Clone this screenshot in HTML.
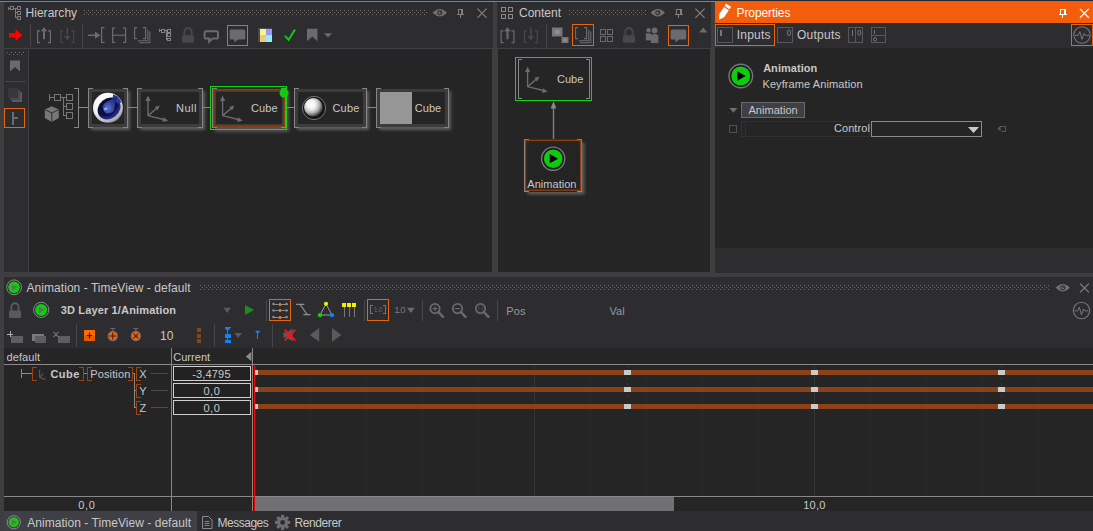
<!DOCTYPE html>
<html lang="en"><head><meta charset="utf-8"><title>Animation - TimeView</title>
<style>
html,body{margin:0;padding:0}
body{width:1093px;height:531px;overflow:hidden;position:relative;background:#3e3e40;font-family:"Liberation Sans",sans-serif;font-size:12px}
#app div{position:absolute}
.t{position:absolute;white-space:nowrap;line-height:1;}
svg#ov{position:absolute;left:0;top:0}
</style></head><body>
<div id="app">
<div style="left:0px;top:0px;width:1093px;height:1px;background:#222a34;"></div>
<div style="left:0px;top:1px;width:1093px;height:1px;background:#f45d0b;"></div>
<div style="left:4px;top:2px;width:489px;height:47px;background:#2d2d30;"></div>
<div style="left:4px;top:48px;width:489px;height:1px;background:#3f3f46;"></div>
<div style="left:4px;top:49px;width:25px;height:223px;background:#2d2d30;"></div>
<div style="left:28px;top:49px;width:1px;height:223px;background:#3f3f46;"></div>
<div style="left:29px;top:49px;width:463px;height:223px;background:#252526;"></div>
<div style="left:492px;top:49px;width:1px;height:223px;background:#3e3e40;"></div>
<div style="left:497px;top:2px;width:214px;height:47px;background:#2d2d30;"></div>
<div style="left:497px;top:48px;width:214px;height:1px;background:#3f3f46;"></div>
<div style="left:498px;top:49px;width:212px;height:223px;background:#252526;"></div>
<div style="left:497px;top:49px;width:1px;height:223px;background:#3e3e40;"></div>
<div style="left:710px;top:49px;width:1px;height:223px;background:#3e3e40;"></div>
<div style="left:715px;top:2px;width:378px;height:21px;background:#f45d0b;"></div>
<div style="left:715px;top:23px;width:378px;height:25px;background:#2d2d30;"></div>
<div style="left:715px;top:48px;width:378px;height:200px;background:#252526;"></div>
<div style="left:715px;top:248px;width:378px;height:25px;background:#2d2d30;"></div>
<div style="left:4px;top:277px;width:1089px;height:71px;background:#2d2d30;"></div>
<div style="left:4px;top:348px;width:1089px;height:163px;background:#252526;"></div>
<div style="left:4px;top:511px;width:1089px;height:20px;background:#2d2d30;"></div>
<div style="left:4px;top:511px;width:193px;height:20px;background:#3f3f46;"></div>
</div>
<svg id="ov" width="1093" height="531" viewBox="0 0 1093 531">
<defs>
<pattern id="grip" x="0" y="0" width="4" height="4" patternUnits="userSpaceOnUse">
<rect x="0" y="0" width="1" height="1" fill="#5c5c60"/><rect x="2" y="2" width="1" height="1" fill="#5c5c60"/></pattern>
<radialGradient id="gSphere" cx="0.38" cy="0.36" r="0.72"><stop offset="0" stop-color="#ffffff"/><stop offset="0.3" stop-color="#f4f4f4"/><stop offset="0.6" stop-color="#b8b8b8"/><stop offset="0.85" stop-color="#505050"/><stop offset="1" stop-color="#101010"/></radialGradient>
<radialGradient id="gC4d" cx="0.35" cy="0.3" r="0.8"><stop offset="0" stop-color="#ffffff"/><stop offset="0.55" stop-color="#f2f2f2"/><stop offset="0.85" stop-color="#b0b0b0"/><stop offset="1" stop-color="#707070"/></radialGradient>
<radialGradient id="gC4dIn" cx="0.5" cy="0.75" r="0.7"><stop offset="0" stop-color="#5a78e0"/><stop offset="0.35" stop-color="#2a3ca0"/><stop offset="0.75" stop-color="#10164a"/><stop offset="1" stop-color="#080a28"/></radialGradient>
<radialGradient id="gCav" cx="0.5" cy="0.35" r="0.75"><stop offset="0" stop-color="#080a2c"/><stop offset="0.55" stop-color="#0c1040"/><stop offset="0.85" stop-color="#3038a8"/><stop offset="1" stop-color="#7078d8"/></radialGradient>
<radialGradient id="gDrop" cx="0.35" cy="0.7" r="0.8"><stop offset="0" stop-color="#5a74e0"/><stop offset="0.45" stop-color="#34449c"/><stop offset="1" stop-color="#1a2060"/></radialGradient>
<filter id="sh" x="-20%" y="-20%" width="150%" height="150%"><feGaussianBlur stdDeviation="1.6"/></filter>
</defs>
<g transform="translate(7.5,6) scale(1.0)" fill="none" stroke="#7c7c80" stroke-width="1" shape-rendering="crispEdges"><path d="M0.5 0.5V3.5"/><path d="M0.5 2H2.5"/><rect x="2.5" y="0.5" width="3" height="3"/><path d="M5.5 2H9.5"/><rect x="9.5" y="0.5" width="3" height="3"/><path d="M7.5 2V11.5H9.5"/><path d="M7.5 6.5H9.5"/><rect x="9.5" y="5" width="3" height="3"/><rect x="9.5" y="10" width="3" height="3"/></g>
<pattern id="gp1" x="84" y="10" width="4" height="4" patternUnits="userSpaceOnUse"><rect x="0" y="0" width="1" height="1" fill="#707074"/><rect x="2" y="2" width="1" height="1" fill="#707074"/></pattern><rect x="84" y="10" width="343" height="5" fill="url(#gp1)"/>
<g transform="translate(439.8,12.8)"><path d="M-7.2 0 Q-3.5 -3.7 0 -3.7 Q3.5 -3.7 7.2 0 Q3.5 3.7 0 3.7 Q-3.5 3.7 -7.2 0Z" fill="#707074"/><circle cx="0" cy="0" r="2.5" fill="#2d2d30"/><circle cx="0" cy="0" r="1.5" fill="#707074"/><circle cx="0.6" cy="-0.6" r="0.7" fill="#2d2d30"/></g>
<g transform="translate(460.3,13.3)" fill="none" stroke="#808084" stroke-width="1" shape-rendering="crispEdges"><path d="M-2 -3.5H2.5V1.5H-2Z"/><path d="M1.5 -3.5V1.5"/><path d="M-3.5 1.5H4"/><path d="M0 1.5V5"/></g>
<path d="M477.4 8.700000000000001L486.6 17.9M486.6 8.700000000000001L477.4 17.9" stroke="#808084" stroke-width="1.2" fill="none"/>
<path d="M9 33H15.5V29.2L22.2 35.2L15.5 41.2V37.4H9Z" fill="#ff0000"/>
<rect x="30" y="24" width="1" height="23" fill="#46464a" shape-rendering="crispEdges"/>
<g transform="translate(37,27.3)" fill="none" stroke="#6a6a6f" stroke-width="1.2"><path d="M3 3.5H0.6V15.4H3"/><path d="M11 3.5H13.4V15.4H11"/></g>
<g transform="translate(37,27.3)"><path d="M7 0L10.4 4H8V12H6V4H3.6Z" fill="#6a6a6f"/></g>
<g transform="translate(60.3,27.3)" fill="none" stroke="#48484c" stroke-width="1.2"><path d="M3 3.5H0.6V15.4H3"/><path d="M11 3.5H13.4V15.4H11"/></g>
<g transform="translate(60.3,27.3)"><path d="M7 13L10.4 9H7.8V0.5H6.2V9H3.6Z" fill="#48484c"/></g>
<rect x="82" y="24" width="1" height="23" fill="#46464a" shape-rendering="crispEdges"/>
<g fill="none" stroke="#6a6a6f" stroke-width="1.3"><path d="M104.6 27.6H101.6V42.4H104.6"/></g><path d="M88 34.4H95V31.6L100.4 35.2L95 38.8V36H88Z" fill="#6a6a6f"/>
<g fill="none" stroke="#6a6a6f" stroke-width="1.2"><path d="M115.2 28.2H112.6V42.4H115.2"/><path d="M123 28.2H125.6V42.4H123"/><path d="M112.6 35.2H125.6"/></g>
<g fill="none" stroke="#6a6a6f" stroke-width="1.1"><path d="M137 27.6H134.6V38.6H137"/><path d="M143 27.6H145.6V38.6H143"/><path d="M147.8 29.7V40.8H137.8"/><path d="M149.8 31.5V42.8H139"/></g>
<g transform="translate(159.2,28.8) scale(0.92)" fill="none" stroke="#8a8a8e" stroke-width="1" shape-rendering="crispEdges"><path d="M0.5 0.5V3.5"/><path d="M0.5 2H2.5"/><rect x="2.5" y="0.5" width="3" height="3"/><path d="M5.5 2H9.5"/><rect x="9.5" y="0.5" width="3" height="3"/><path d="M7.5 2V11.5H9.5"/><path d="M7.5 6.5H9.5"/><rect x="9.5" y="5" width="3" height="3"/><rect x="9.5" y="10" width="3" height="3"/></g>
<g transform="translate(182,27.2)"><path d="M2.4 8.4V4.6A3.6 3.8 0 0 1 9.6 4.6V8.4" fill="none" stroke="#48484c" stroke-width="1.9"/><rect x="0" y="8" width="12" height="7.6" rx="1" fill="#48484c"/></g>
<path d="M205.79999999999998 31.2H216.8Q218.0 31.2 218.0 32.4V37.4Q218.0 38.6 216.8 38.6H212.53199999999998L209.144 41.800000000000004V38.6H205.79999999999998Q204.6 38.6 204.6 37.4V32.4Q204.6 31.2 205.79999999999998 31.2Z" fill="none" stroke="#6a6a6f" stroke-width="2"/>
<rect x="227.5" y="25.5" width="20" height="20" fill="none" stroke="#e8640f" stroke-width="1" shape-rendering="crispEdges"/>
<path d="M231.1 29.6H243.79999999999998Q245.29999999999998 29.6 245.29999999999998 31.1V38.1Q245.29999999999998 39.6 243.79999999999998 39.6H238.23499999999999L234.31 42.6V39.6H231.1Q229.6 39.6 229.6 38.1V31.1Q229.6 29.6 231.1 29.6Z" fill="#6a6a6f"/>
<g shape-rendering="crispEdges"><rect x="258" y="28" width="14" height="14" fill="#4a4a4e"/><rect x="259.5" y="28.5" width="6" height="6.5" fill="#f5f58a"/><rect x="265.5" y="28.5" width="6" height="6.5" fill="#9a96ff"/><rect x="259.5" y="35" width="6" height="6.5" fill="#f5c67a"/><rect x="265.5" y="35" width="6" height="6.5" fill="#8cf0f5"/></g>
<path d="M285 35.8L288.6 39.8L295 29.4" fill="none" stroke="#12c812" stroke-width="2"/>
<path d="M307 28.8H317.5V41.2L312.2 36.6L307 41.2Z" fill="#6a6a6f"/><path d="M324 33.2H332L328 37.6Z" fill="#6a6a6f"/>
<pattern id="gp2" x="7" y="52" width="4" height="4" patternUnits="userSpaceOnUse"><rect x="0" y="0" width="1" height="1" fill="#707074"/><rect x="2" y="2" width="1" height="1" fill="#707074"/></pattern><rect x="7" y="52" width="18" height="3" fill="url(#gp2)"/>
<path d="M10 60.4H20V71.6L15 67L10 71.6Z" fill="#6a6a6f"/>
<rect x="5" y="81" width="21" height="1" fill="#46464a" shape-rendering="crispEdges"/>
<g shape-rendering="crispEdges"><rect x="12" y="92" width="10" height="10" fill="#5a5a5e"/><rect x="10" y="90" width="10" height="10" fill="#48484c"/><rect x="8" y="88" width="10" height="9.5" fill="#38383c"/></g>
<rect x="4.5" y="108.5" width="20" height="19" fill="none" stroke="#e8640f" stroke-width="1" shape-rendering="crispEdges"/>
<g shape-rendering="crispEdges" fill="#6a6a6f"><rect x="12" y="112" width="2" height="12.5"/><rect x="14" y="117.2" width="4" height="2"/></g>
<g fill="none" stroke="#77777b" stroke-width="1" shape-rendering="crispEdges"><rect x="54.5" y="94.5" width="6" height="6"/><rect x="66.5" y="94.5" width="6" height="6"/><rect x="66.5" y="103.5" width="6" height="6"/><rect x="66.5" y="112.5" width="6" height="6"/><path d="M49.5 94V101"/><path d="M49.5 97.5H54.5"/><path d="M60.5 97.5H66.5"/><path d="M63.5 97.5V115.5H66.5"/><path d="M63.5 106.5H66.5"/></g>
<g transform="translate(44.8,106.3)"><path d="M7 0L14 3.2V11.6L7 15.8L0 11.6V3.2Z" fill="#77777b"/><path d="M0.4 3.4L7 6.8L13.6 3.4M7 6.8V15.4" stroke="#252526" stroke-width="0.9" fill="none"/></g>
<path d="M74 88.5H78.5V127.5H74" fill="none" stroke="#868686" stroke-width="1" shape-rendering="crispEdges"/>
<rect x="79" y="107" width="9" height="1" fill="#868686" shape-rendering="crispEdges"/>
<rect x="91" y="91" width="39" height="39" fill="#8a8a8a" opacity="0.55" filter="url(#sh)"/>
<rect x="89" y="89" width="38" height="38" fill="#3c3c3e" shape-rendering="crispEdges"/>
<rect x="92" y="92" width="32" height="32" fill="#252526" shape-rendering="crispEdges"/>
<g fill="none" stroke="#868686" stroke-width="1" shape-rendering="crispEdges"><path d="M93 88.5H88.5V127.5H93"/><path d="M123 88.5H127.5V127.5H123"/></g>
<rect x="128" y="107" width="9" height="1" fill="#868686" shape-rendering="crispEdges"/>
<rect x="140" y="91" width="65" height="39" fill="#8a8a8a" opacity="0.55" filter="url(#sh)"/>
<rect x="138" y="89" width="64" height="38" fill="#3c3c3e" shape-rendering="crispEdges"/>
<rect x="141" y="92" width="58" height="32" fill="#252526" shape-rendering="crispEdges"/>
<g fill="none" stroke="#868686" stroke-width="1" shape-rendering="crispEdges"><path d="M142 88.5H137.5V127.5H142"/><path d="M198 88.5H202.5V127.5H198"/></g>
<rect x="203" y="107" width="7" height="1" fill="#868686" shape-rendering="crispEdges"/>
<rect x="215" y="91" width="74" height="41" fill="#8a8a8a" opacity="0.45" filter="url(#sh)"/>
<rect x="213" y="89" width="72" height="38" fill="#3c3c3e" shape-rendering="crispEdges"/>
<rect x="216" y="92" width="66" height="32" fill="#252526" shape-rendering="crispEdges"/>
<g fill="none" stroke="#868686" stroke-width="1" shape-rendering="crispEdges"><path d="M217 88.5H212.5V127.5H217"/><path d="M281 88.5H285.5V127.5H281"/></g>
<rect x="213.75" y="89.75" width="70.5" height="36.5" fill="none" stroke="#8e3c0c" stroke-width="1.6"/>
<rect x="210.5" y="86.5" width="76" height="43" fill="none" stroke="#14d214" stroke-width="1" shape-rendering="crispEdges"/>
<circle cx="284" cy="93" r="4.5" fill="#0fcc0f"/>
<rect x="287" y="107" width="7" height="1" fill="#868686" shape-rendering="crispEdges"/>
<rect x="297" y="91" width="72" height="39" fill="#8a8a8a" opacity="0.55" filter="url(#sh)"/>
<rect x="295" y="89" width="71" height="38" fill="#3c3c3e" shape-rendering="crispEdges"/>
<rect x="298" y="92" width="65" height="32" fill="#252526" shape-rendering="crispEdges"/>
<g fill="none" stroke="#868686" stroke-width="1" shape-rendering="crispEdges"><path d="M299 88.5H294.5V127.5H299"/><path d="M362 88.5H366.5V127.5H362"/></g>
<rect x="367" y="107" width="9" height="1" fill="#868686" shape-rendering="crispEdges"/>
<rect x="379" y="91" width="72" height="39" fill="#8a8a8a" opacity="0.55" filter="url(#sh)"/>
<rect x="377" y="89" width="71" height="38" fill="#3c3c3e" shape-rendering="crispEdges"/>
<rect x="380" y="92" width="65" height="32" fill="#252526" shape-rendering="crispEdges"/>
<g fill="none" stroke="#868686" stroke-width="1" shape-rendering="crispEdges"><path d="M381 88.5H376.5V127.5H381"/><path d="M444 88.5H448.5V127.5H444"/></g>
<rect x="380" y="92" width="32" height="32" fill="#969696" shape-rendering="crispEdges"/>
<g transform="translate(148,115.6) scale(1.0)"><g stroke="#6a6a6f" stroke-width="1.4" fill="none"><path d="M0 0.5V-16"/><path d="M0 0L9 -7.6"/><path d="M0 0L16.5 4.2"/></g><path d="M0 -20.2L-2.6 -14.6H2.6Z" fill="#6a6a6f"/><path d="M11.8 -10L6.6 -8.6L9.6 -5Z" fill="#6a6a6f"/><path d="M20.2 5.2L14.4 6.4L15.7 1.6Z" fill="#6a6a6f"/></g>
<g transform="translate(222.6,115.6) scale(1.0)"><g stroke="#6a6a6f" stroke-width="1.4" fill="none"><path d="M0 0.5V-16"/><path d="M0 0L9 -7.6"/><path d="M0 0L16.5 4.2"/></g><path d="M0 -20.2L-2.6 -14.6H2.6Z" fill="#6a6a6f"/><path d="M11.8 -10L6.6 -8.6L9.6 -5Z" fill="#6a6a6f"/><path d="M20.2 5.2L14.4 6.4L15.7 1.6Z" fill="#6a6a6f"/></g>
<circle cx="314" cy="108" r="11.6" fill="#141414" stroke="#77777b" stroke-width="1"/><circle cx="313.4" cy="107.3" r="9.3" fill="url(#gSphere)"/>
<g transform="translate(108,107.8)"><circle r="15" fill="url(#gC4d)"/>
<g transform="rotate(-38)"><ellipse cx="0.4" cy="1.2" rx="12.2" ry="10.2" fill="url(#gCav)"/></g>
<path d="M5.2 -13.6Q10.8 -11.6 13.4 -5.4L9.4 -4.2L4.6 -9.8Z" fill="#2a38a4"/>
<path d="M9.6 -11.8C7.6 -8.4 7.2 -4 6.6 -0.6A5.9 5.9 0 1 1 -2.2 -5.4C1.4 -8 6.4 -9 9.6 -11.8Z" fill="url(#gDrop)"/>
<ellipse cx="-2.4" cy="1.0" rx="1.7" ry="1.1" fill="#a8c0ff" opacity="0.85" transform="rotate(-30 -2.4 1)"/>
</g>
<g fill="none" stroke="#8a8a8e" stroke-width="1" shape-rendering="crispEdges"><rect x="501.5" y="7.5" width="4" height="4"/><rect x="508.0" y="7.5" width="4" height="4"/><rect x="501.5" y="14.0" width="4" height="4"/><rect x="508.0" y="14.0" width="4" height="4"/></g>
<pattern id="gp3" x="569" y="10" width="4" height="4" patternUnits="userSpaceOnUse"><rect x="0" y="0" width="1" height="1" fill="#707074"/><rect x="2" y="2" width="1" height="1" fill="#707074"/></pattern><rect x="569" y="10" width="77" height="5" fill="url(#gp3)"/>
<g transform="translate(657.8,12.8)"><path d="M-7.2 0 Q-3.5 -3.7 0 -3.7 Q3.5 -3.7 7.2 0 Q3.5 3.7 0 3.7 Q-3.5 3.7 -7.2 0Z" fill="#707074"/><circle cx="0" cy="0" r="2.5" fill="#2d2d30"/><circle cx="0" cy="0" r="1.5" fill="#707074"/><circle cx="0.6" cy="-0.6" r="0.7" fill="#2d2d30"/></g>
<g transform="translate(678.5,13.3)" fill="none" stroke="#808084" stroke-width="1" shape-rendering="crispEdges"><path d="M-2 -3.5H2.5V1.5H-2Z"/><path d="M1.5 -3.5V1.5"/><path d="M-3.5 1.5H4"/><path d="M0 1.5V5"/></g>
<path d="M695.4 8.700000000000001L704.6 17.9M704.6 8.700000000000001L695.4 17.9" stroke="#808084" stroke-width="1.2" fill="none"/>
<g transform="translate(500.5,27.3)" fill="none" stroke="#6a6a6f" stroke-width="1.2"><path d="M3 3.5H0.6V15.4H3"/><path d="M11 3.5H13.4V15.4H11"/></g>
<g transform="translate(500.5,27.3)"><path d="M7 0L10.4 4H8V12H6V4H3.6Z" fill="#6a6a6f"/></g>
<g transform="translate(523.8,27.3)" fill="none" stroke="#48484c" stroke-width="1.2"><path d="M3 3.5H0.6V15.4H3"/><path d="M11 3.5H13.4V15.4H11"/></g>
<g transform="translate(523.8,27.3)"><path d="M7 13L10.4 9H7.8V0.5H6.2V9H3.6Z" fill="#48484c"/></g>
<rect x="546" y="24" width="1" height="23" fill="#46464a" shape-rendering="crispEdges"/>
<g><rect x="552" y="27.5" width="10.5" height="9" fill="#77777b"/><rect x="554.94" y="29.84" width="4.62" height="4.32" fill="#8e8e92"/></g>
<g><rect x="561.5" y="37" width="7" height="6" fill="#77777b"/><rect x="563.46" y="38.56" width="3.08" height="2.88" fill="#8e8e92"/></g>
<rect x="572.5" y="24.5" width="21" height="21" fill="none" stroke="#e8640f" stroke-width="1" shape-rendering="crispEdges"/>
<g fill="none" stroke="#6a6a6f" stroke-width="1.1"><path d="M578 27.6H575.6V38.6H578"/><path d="M584 27.6H586.6V38.6H584"/><path d="M588.8 29.7V40.8H578.8"/><path d="M590.8 31.5V42.8H580"/></g>
<g fill="none" stroke="#6a6a6f" stroke-width="1" shape-rendering="crispEdges"><rect x="600.5" y="29.5" width="4.5" height="4.5"/><rect x="607.5" y="29.5" width="4.5" height="4.5"/><rect x="600.5" y="36.5" width="4.5" height="4.5"/><rect x="607.5" y="36.5" width="4.5" height="4.5"/></g>
<g transform="translate(623,27.2)"><path d="M2.4 8.4V4.6A3.6 3.8 0 0 1 9.6 4.6V8.4" fill="none" stroke="#48484c" stroke-width="1.9"/><rect x="0" y="8" width="12" height="7.6" rx="1" fill="#48484c"/></g>
<g fill="#6a6a6f"><circle cx="648.6" cy="30.2" r="2.2"/><path d="M645.8 33.4H651.2V40.4H645.8Z"/><circle cx="654.6" cy="30.4" r="2.9"/><path d="M650.8 43V36.8Q650.8 34 654.6 34Q658.4 34 658.4 36.8V43Z"/></g>
<rect x="668.5" y="25.5" width="20" height="20" fill="none" stroke="#e8640f" stroke-width="1" shape-rendering="crispEdges"/>
<path d="M672.1 29.6H684.8000000000001Q686.3000000000001 29.6 686.3000000000001 31.1V38.1Q686.3000000000001 39.6 684.8000000000001 39.6H679.235L675.3100000000001 42.6V39.6H672.1Q670.6 39.6 670.6 38.1V31.1Q670.6 29.6 672.1 29.6Z" fill="#6a6a6f"/>
<path d="M699 32.4H707.4L703.2 27.6Z" fill="#6a6a6f"/>
<rect x="515.5" y="57.5" width="76" height="43" fill="none" stroke="#14d214" stroke-width="1" shape-rendering="crispEdges"/>
<g fill="none" stroke="#868686" stroke-width="1" shape-rendering="crispEdges"><path d="M522 59.5H518.5V98.5H522"/><path d="M586 59.5H589.5V98.5H586"/></g>
<g transform="translate(527.6,86.6) scale(1.0)"><g stroke="#6a6a6f" stroke-width="1.4" fill="none"><path d="M0 0.5V-16"/><path d="M0 0L9 -7.6"/><path d="M0 0L16.5 4.2"/></g><path d="M0 -20.2L-2.6 -14.6H2.6Z" fill="#6a6a6f"/><path d="M11.8 -10L6.6 -8.6L9.6 -5Z" fill="#6a6a6f"/><path d="M20.2 5.2L14.4 6.4L15.7 1.6Z" fill="#6a6a6f"/></g>
<rect x="552.8" y="106" width="1.4" height="33.5" fill="#808084"/><path d="M553.5 101.2L556.4 108.6H550.6Z" fill="#8a8a8e"/>
<rect x="527.5" y="142.5" width="57" height="52" fill="#8a8a8a" opacity="0.55" filter="url(#sh)"/>
<rect x="524" y="139" width="58" height="52.5" fill="#242425" shape-rendering="crispEdges"/>
<g fill="none" stroke="#8c8c8c" stroke-width="1" shape-rendering="crispEdges"><path d="M529 139.5H524.5V191H529"/><path d="M577 139.5H581.5V191H577"/></g>
<rect x="525.6" y="140.4" width="55" height="49.8" fill="none" stroke="#8e3c0c" stroke-width="1.4"/>
<circle cx="553.2" cy="158.7" r="11.6" fill="#1c1c1d" stroke="#77777b" stroke-width="1.4"/><circle cx="553.2" cy="158.7" r="9.3" fill="#0ecb0e"/><path d="M549.72 154.06L558.072 158.7L549.72 163.33999999999997Z" fill="#000000"/>
<g transform="translate(719.2,19.4) rotate(-56.5)" fill="#ffffff"><path d="M0 0L4.6 -2.9H13V2.9H4.6Z"/><rect x="14.2" y="-3" width="2.8" height="6" rx="0.6"/></g>
<g transform="translate(1062.5,13.3)" fill="none" stroke="#ffffff" stroke-width="1" shape-rendering="crispEdges"><path d="M-2 -3.5H2.5V1.5H-2Z"/><path d="M1.5 -3.5V1.5"/><path d="M-3.5 1.5H4"/><path d="M0 1.5V5"/></g>
<path d="M1080.0 8.9L1088.8000000000002 17.700000000000003M1088.8000000000002 8.9L1080.0 17.700000000000003" stroke="#ffffff" stroke-width="1.3" fill="none"/>
<rect x="715.5" y="24.5" width="59" height="21" fill="none" stroke="#e8640f" stroke-width="1" shape-rendering="crispEdges"/>
<g fill="none" stroke="#58585c" stroke-width="1" shape-rendering="crispEdges"><rect x="717.5" y="27.5" width="15" height="15"/><rect x="777.5" y="27.5" width="15" height="15"/><rect x="848.5" y="27.5" width="14" height="15"/><path d="M855.5 27.5V42.5"/><rect x="871.5" y="27.5" width="14" height="15"/><path d="M871.5 35.5H885.5"/></g>
<g shape-rendering="crispEdges" fill="#77777b"><rect x="720" y="29.5" width="2" height="6.5"/><rect x="851.5" y="30" width="1" height="5.5"/><rect x="874" y="29.5" width="1" height="4"/></g>
<g fill="none" stroke="#77777b" stroke-width="1"><ellipse cx="789" cy="32.8" rx="1.6" ry="2.9"/><ellipse cx="859.3" cy="32.8" rx="1.5" ry="2.7"/><ellipse cx="875" cy="39.3" rx="1.5" ry="1.7"/></g>
<rect x="1071.5" y="24.5" width="21" height="21" fill="none" stroke="#e8640f" stroke-width="1" shape-rendering="crispEdges"/>
<circle cx="1082" cy="35" r="8.2" fill="none" stroke="#77777b" stroke-width="1.1"/><path d="M1075 35.4H1078.2L1079.8 31.6L1082 39.4L1084 33.4L1085.4 35.4H1089" fill="none" stroke="#77777b" stroke-width="1"/>
<circle cx="740.8" cy="76" r="11.8" fill="#1c1c1d" stroke="#77777b" stroke-width="1.4"/><circle cx="740.8" cy="76" r="9.5" fill="#0ecb0e"/><path d="M737.26 71.28L745.756 76L737.26 80.72Z" fill="#000000"/>
<path d="M729.4 108H737.4L733.4 112.8Z" fill="#6e6e72"/>
<rect x="741.5" y="102.5" width="63" height="15" fill="#3f3f46" stroke="#6a6a6e" stroke-width="1" shape-rendering="crispEdges"/>
<rect x="729.5" y="125.5" width="7" height="7" fill="none" stroke="#505054" stroke-width="1" shape-rendering="crispEdges"/>
<g fill="none" stroke="#303033" stroke-width="1" shape-rendering="crispEdges"><rect x="741.5" y="121.5" width="128" height="15"/><path d="M745.5 121.5V136.5"/></g>
<rect x="871.5" y="121.5" width="110" height="15" fill="#252526" stroke="#8a8a8a" stroke-width="1" shape-rendering="crispEdges"/>
<path d="M968 127H979L973.5 133Z" fill="#cccccc"/>
<g fill="none" stroke="#5a5a5e" stroke-width="1"><path d="M1000 126.5H1005.5V131.5H1001.5"/></g><path d="M997.4 128.6L1000.6 126V131.2Z" fill="#5a5a5e"/>
<circle cx="14.1" cy="287.3" r="7.4" fill="#2d2d30" stroke="#8a8a8e" stroke-width="1"/><circle cx="14.1" cy="287.3" r="5.800000000000001" fill="#10cc10"/><path d="M11.879999999999999 284.192L17.8 287.3L11.879999999999999 290.408Z" fill="#6a6a6a"/>
<pattern id="gp4" x="200" y="285" width="4" height="4" patternUnits="userSpaceOnUse"><rect x="0" y="0" width="1" height="1" fill="#707074"/><rect x="2" y="2" width="1" height="1" fill="#707074"/></pattern><rect x="200" y="285" width="850" height="5" fill="url(#gp4)"/>
<g transform="translate(1062.8,287.8)"><path d="M-7.2 0 Q-3.5 -3.7 0 -3.7 Q3.5 -3.7 7.2 0 Q3.5 3.7 0 3.7 Q-3.5 3.7 -7.2 0Z" fill="#707074"/><circle cx="0" cy="0" r="2.5" fill="#2d2d30"/><circle cx="0" cy="0" r="1.5" fill="#707074"/><circle cx="0.6" cy="-0.6" r="0.7" fill="#2d2d30"/></g>
<path d="M1080.1 283.6L1088.9 292.4M1088.9 283.6L1080.1 292.4" stroke="#808084" stroke-width="1.2" fill="none"/>
<g transform="translate(9,302.4)"><path d="M2.4 8.4V4.6A3.6 3.8 0 0 1 9.6 4.6V8.4" fill="none" stroke="#5a5a5e" stroke-width="1.9"/><rect x="0" y="8" width="12" height="7.6" rx="1" fill="#5a5a5e"/></g>
<circle cx="41.2" cy="309.9" r="7.6" fill="#2d2d30" stroke="#8a8a8e" stroke-width="1"/><circle cx="41.2" cy="309.9" r="6.0" fill="#10cc10"/><path d="M38.92 306.70799999999997L45.0 309.9L38.92 313.092Z" fill="#6a6a6a"/>
<path d="M223.4 307.8H231L227.2 313Z" fill="#5a5a5e"/>
<path d="M245 305L254.2 310L245 315Z" fill="#1f8a1f"/>
<rect x="266" y="300" width="1" height="21" fill="#46464a" shape-rendering="crispEdges"/>
<rect x="269.5" y="299.5" width="21" height="21" fill="none" stroke="#e8640f" stroke-width="1" shape-rendering="crispEdges"/>
<g shape-rendering="crispEdges"><rect x="272.5" y="303.5" width="15" height="1" fill="#8a8a8e"/><rect x="278.8" y="302.5" width="2.4" height="3" fill="#f07010"/></g><circle cx="273.5" cy="304.0" r="1.3" fill="#8a8a8e"/><circle cx="286.5" cy="304.0" r="1.3" fill="#8a8a8e"/>
<g shape-rendering="crispEdges"><rect x="272.5" y="310" width="15" height="1" fill="#8a8a8e"/><rect x="278.8" y="309" width="2.4" height="3" fill="#f07010"/></g><circle cx="273.5" cy="310.5" r="1.3" fill="#8a8a8e"/><circle cx="286.5" cy="310.5" r="1.3" fill="#8a8a8e"/>
<g shape-rendering="crispEdges"><rect x="272.5" y="316.5" width="15" height="1" fill="#8a8a8e"/><rect x="278.8" y="315.5" width="2.4" height="3" fill="#f07010"/></g><circle cx="273.5" cy="317.0" r="1.3" fill="#8a8a8e"/><circle cx="286.5" cy="317.0" r="1.3" fill="#8a8a8e"/>
<path d="M300 304.3L307.2 314.7" fill="none" stroke="#8a8a8e" stroke-width="1.2"/><path d="M296 304.3H304.4" stroke="#a4a4a8" stroke-width="1"/><path d="M303.4 314.7H310.6" stroke="#a4a4a8" stroke-width="1"/>
<path d="M326 304L320 315H332Z" fill="none" stroke="#9a9a9e" stroke-width="1"/><circle cx="326" cy="303.8" r="2.1" fill="#f0f000"/><circle cx="320" cy="315.2" r="2.1" fill="#10d010"/><circle cx="332" cy="315.2" r="2.1" fill="#1080ff"/>
<g shape-rendering="crispEdges"><rect x="342" y="303" width="4" height="4" fill="#f0f000"/><rect x="344" y="307" width="1" height="10" fill="#77777b"/></g>
<g shape-rendering="crispEdges"><rect x="347" y="303" width="4" height="4" fill="#f0f000"/><rect x="349" y="307" width="1" height="10" fill="#77777b"/></g>
<g shape-rendering="crispEdges"><rect x="352" y="303" width="4" height="4" fill="#f0f000"/><rect x="354" y="307" width="1" height="10" fill="#77777b"/></g>
<rect x="364" y="300" width="1" height="21" fill="#46464a" shape-rendering="crispEdges"/>
<rect x="367.5" y="299.5" width="21" height="21" fill="none" stroke="#e8640f" stroke-width="1" shape-rendering="crispEdges"/>
<g fill="none" stroke="#77777b" stroke-width="1" shape-rendering="crispEdges"><path d="M373 305.5H370.5V313.5H373"/><path d="M383 305.5H385.5V313.5H383"/></g>
<path d="M407 307.8H414.8L410.9 313Z" fill="#6a6a6f"/>
<rect x="422" y="300" width="1" height="21" fill="#46464a" shape-rendering="crispEdges"/>
<circle cx="435" cy="308.6" r="4.7" fill="none" stroke="#6a6a6f" stroke-width="1.8"/><path d="M438.4 312.0L443 316.8" stroke="#6a6a6f" stroke-width="2.4" stroke-linecap="round"/>
<path d="M432.6 308.6H437.4" stroke="#6a6a6f" stroke-width="1.2"/>
<path d="M435 306.20000000000005V311.0" stroke="#6a6a6f" stroke-width="1.2"/>
<circle cx="457.5" cy="308.6" r="4.7" fill="none" stroke="#6a6a6f" stroke-width="1.8"/><path d="M460.9 312.0L465.5 316.8" stroke="#6a6a6f" stroke-width="2.4" stroke-linecap="round"/>
<path d="M455.1 308.6H459.9" stroke="#6a6a6f" stroke-width="1.2"/>
<circle cx="480.5" cy="308.6" r="4.7" fill="none" stroke="#6a6a6f" stroke-width="1.8"/><path d="M483.9 312.0L488.5 316.8" stroke="#6a6a6f" stroke-width="2.4" stroke-linecap="round"/>
<path d="M478.9 306.40000000000003V310.8M482.1 306.40000000000003V310.8" stroke="#6a6a6f" stroke-width="1" stroke-dasharray="1 1"/>
<rect x="497" y="300" width="1" height="21" fill="#46464a" shape-rendering="crispEdges"/>
<circle cx="1081.5" cy="310.5" r="8.2" fill="none" stroke="#77777b" stroke-width="1.1"/><path d="M1074.5 310.9H1077.7L1079.3 307.1L1081.5 314.9L1083.5 308.9L1084.9 310.9H1088.5" fill="none" stroke="#77777b" stroke-width="1"/>
<g shape-rendering="crispEdges"><rect x="11" y="336" width="12" height="7" fill="#5e5e62"/><rect x="9.5" y="331" width="1" height="6" fill="#b0b0b0"/><rect x="7" y="333.5" width="6" height="1" fill="#b0b0b0"/><rect x="32" y="333.5" width="12" height="7" fill="#7a7a7e"/><rect x="34.5" y="336" width="11.5" height="7" fill="#5e5e62"/><rect x="57.5" y="336" width="12" height="7" fill="#5e5e62"/></g><path d="M53.4 331.8L58.6 337.2M58.6 331.8L53.4 337.2" stroke="#77777b" stroke-width="1.1"/>
<rect x="76" y="324" width="1" height="23" fill="#46464a" shape-rendering="crispEdges"/>
<rect x="84" y="330" width="11" height="11" fill="#ff6a00" shape-rendering="crispEdges"/><rect x="84" y="336" width="11" height="5" fill="#e85c00" shape-rendering="crispEdges"/><path d="M86.8 335.5H92.2M89.5 332.8V338.2" stroke="#2a1200" stroke-width="1.2"/>
<path d="M110.3 328.6H115.3M112.8 328.6V331" stroke="#6a6a6f" stroke-width="1"/><circle cx="112.8" cy="336" r="5.2" fill="#6a6a6f"/><circle cx="112.8" cy="336" r="4.2" fill="#e86410"/>
<path d="M109.39999999999999 336H116.2M112.8 332.6V339.4" stroke="#4a1c00" stroke-width="1.1"/>
<path d="M133.4 328.6H138.4M135.9 328.6V331" stroke="#6a6a6f" stroke-width="1"/><circle cx="135.9" cy="336" r="5.2" fill="#6a6a6f"/><circle cx="135.9" cy="336" r="4.2" fill="#e86410"/>
<path d="M133.5 333.6L138.3 338.4M138.3 333.6L133.5 338.4" stroke="#4a1c00" stroke-width="1.1"/>
<g shape-rendering="crispEdges" fill="#8a4514"><rect x="197" y="328" width="4" height="4"/><rect x="197" y="333.5" width="4" height="4"/><rect x="197" y="339" width="4" height="4"/></g>
<rect x="214" y="324" width="1" height="23" fill="#46464a" shape-rendering="crispEdges"/>
<g shape-rendering="crispEdges" fill="#1080ff"><rect x="224.5" y="327" width="6" height="1.4"/><rect x="224.5" y="334" width="6" height="4"/><rect x="224.5" y="340" width="6" height="3.4"/><rect x="227" y="329" width="1" height="12"/></g><path d="M224.8 328L230.2 328L227.5 331.6Z" fill="#1080ff"/>
<path d="M234.4 333H242L238.2 338Z" fill="#5a5a5e"/>
<path d="M255 330.8H260.4L257.7 334.2Z" fill="#1080ff"/><rect x="257.2" y="333" width="1" height="6.4" fill="#1080ff" shape-rendering="crispEdges"/>
<rect x="272" y="324" width="1" height="23" fill="#46464a" shape-rendering="crispEdges"/>
<path d="M283.4 332.4H286.6L292.6 328.4V341.6L286.6 337.6H283.4Z" fill="#5a5a5e"/><path d="M284.8 329.6L295.4 340.6M295.4 329.6L284.8 340.6" stroke="#ff1010" stroke-width="1.9"/>
<path d="M319.2 328L309.8 334.9L319.2 341.8Z" fill="#5a5a5e"/><path d="M332 328L341.4 334.9L332 341.8Z" fill="#5a5a5e"/>
<g shape-rendering="crispEdges"><rect x="4" y="364" width="1089" height="1" fill="#888888"/><rect x="171" y="348" width="1" height="163" fill="#888888"/><rect x="252" y="348" width="1" height="163" fill="#888888"/><rect x="4" y="496" width="1089" height="1" fill="#888888"/></g>
<path d="M251.4 351.8V361.2L245.8 356.5Z" fill="#8a8a8a"/>
<g shape-rendering="crispEdges"><rect x="310" y="365" width="1" height="131" fill="#2b2b2d"/><rect x="366" y="365" width="1" height="131" fill="#2b2b2d"/><rect x="422" y="365" width="1" height="131" fill="#2b2b2d"/><rect x="478" y="365" width="1" height="131" fill="#2b2b2d"/><rect x="534" y="365" width="1" height="131" fill="#353537"/><rect x="590" y="365" width="1" height="131" fill="#2b2b2d"/><rect x="646" y="365" width="1" height="131" fill="#2b2b2d"/><rect x="702" y="365" width="1" height="131" fill="#2b2b2d"/><rect x="758" y="365" width="1" height="131" fill="#2b2b2d"/><rect x="814" y="365" width="1" height="131" fill="#353537"/><rect x="870" y="365" width="1" height="131" fill="#2b2b2d"/><rect x="926" y="365" width="1" height="131" fill="#2b2b2d"/><rect x="982" y="365" width="1" height="131" fill="#2b2b2d"/><rect x="1038" y="365" width="1" height="131" fill="#2b2b2d"/></g>
<path d="M627.5 365V412" stroke="#343436" stroke-width="1" stroke-dasharray="3 3" shape-rendering="crispEdges"/>
<path d="M814.5 365V412" stroke="#343436" stroke-width="1" stroke-dasharray="3 3" shape-rendering="crispEdges"/>
<path d="M1001.5 365V412" stroke="#343436" stroke-width="1" stroke-dasharray="3 3" shape-rendering="crispEdges"/>
<g shape-rendering="crispEdges" fill="#888888"><rect x="21" y="369" width="1" height="9"/><rect x="21" y="373" width="11" height="1"/><rect x="84" y="373" width="3" height="1"/><rect x="133" y="373" width="2" height="1"/><rect x="134" y="373" width="1" height="35"/><rect x="134" y="390" width="2" height="1"/><rect x="134" y="407" width="2" height="1"/></g>
<path d="M36.5 367.5H32.5V380.5H36.5" fill="none" stroke="#9c4510" stroke-width="1" shape-rendering="crispEdges"/>
<path d="M79 367.5H83.5V380.5H79" fill="none" stroke="#9c4510" stroke-width="1" shape-rendering="crispEdges"/>
<path d="M91.5 367.5H87.5V380.5H91.5" fill="none" stroke="#9c4510" stroke-width="1" shape-rendering="crispEdges"/>
<path d="M128 367.5H132.5V380.5H128" fill="none" stroke="#9c4510" stroke-width="1" shape-rendering="crispEdges"/>
<path d="M140.5 367.5H136.5V380.5H140.5" fill="none" stroke="#9c4510" stroke-width="1" shape-rendering="crispEdges"/>
<path d="M140.5 384.5H136.5V397.5H140.5" fill="none" stroke="#9c4510" stroke-width="1" shape-rendering="crispEdges"/>
<path d="M140.5 401.5H136.5V414.5H140.5" fill="none" stroke="#9c4510" stroke-width="1" shape-rendering="crispEdges"/>
<path d="M39.6 369.8V377.4L45.4 379.6M39.6 377.4L43.4 373.6" fill="none" stroke="#56565a" stroke-width="1.2"/>
<rect x="151" y="373" width="17" height="1" fill="#4c4c4e" shape-rendering="crispEdges"/>
<rect x="151" y="390" width="17" height="1" fill="#4c4c4e" shape-rendering="crispEdges"/>
<rect x="151" y="407" width="17" height="1" fill="#4c4c4e" shape-rendering="crispEdges"/>
<rect x="173.5" y="366.5" width="77" height="14" fill="#222223" stroke="#cfcfcf" stroke-width="1" shape-rendering="crispEdges"/>
<rect x="173.5" y="383.5" width="77" height="14" fill="#222223" stroke="#cfcfcf" stroke-width="1" shape-rendering="crispEdges"/>
<rect x="173.5" y="400.5" width="77" height="14" fill="#222223" stroke="#cfcfcf" stroke-width="1" shape-rendering="crispEdges"/>
<rect x="255" y="370" width="838" height="5" fill="#8b4219" shape-rendering="crispEdges"/>
<rect x="255" y="370" width="3" height="5" fill="#cacaca" shape-rendering="crispEdges"/>
<rect x="624" y="370" width="7" height="5" fill="#cacaca" shape-rendering="crispEdges"/>
<rect x="811" y="370" width="7" height="5" fill="#cacaca" shape-rendering="crispEdges"/>
<rect x="998" y="370" width="7" height="5" fill="#cacaca" shape-rendering="crispEdges"/>
<rect x="255" y="387" width="838" height="5" fill="#8b4219" shape-rendering="crispEdges"/>
<rect x="255" y="387" width="3" height="5" fill="#cacaca" shape-rendering="crispEdges"/>
<rect x="624" y="387" width="7" height="5" fill="#cacaca" shape-rendering="crispEdges"/>
<rect x="811" y="387" width="7" height="5" fill="#cacaca" shape-rendering="crispEdges"/>
<rect x="998" y="387" width="7" height="5" fill="#cacaca" shape-rendering="crispEdges"/>
<rect x="255" y="404" width="838" height="5" fill="#8b4219" shape-rendering="crispEdges"/>
<rect x="255" y="404" width="3" height="5" fill="#cacaca" shape-rendering="crispEdges"/>
<rect x="624" y="404" width="7" height="5" fill="#cacaca" shape-rendering="crispEdges"/>
<rect x="811" y="404" width="7" height="5" fill="#cacaca" shape-rendering="crispEdges"/>
<rect x="998" y="404" width="7" height="5" fill="#cacaca" shape-rendering="crispEdges"/>
<rect x="254" y="365" width="1" height="146" fill="#ff0000" shape-rendering="crispEdges"/>
<rect x="255" y="497" width="419" height="14" fill="#717173" shape-rendering="crispEdges"/>
<circle cx="13.8" cy="522.3" r="6.6" fill="#3f3f46" stroke="#8a8a8e" stroke-width="1"/><circle cx="13.8" cy="522.3" r="5.0" fill="#10cc10"/><path d="M11.82 519.5279999999999L17.1 522.3L11.82 525.072Z" fill="#6a6a6a"/>
<path d="M202.5 516.5H208.5L212 520V528.5H202.5Z" fill="none" stroke="#8a8a8e" stroke-width="1"/><path d="M204.5 521.5H209.5M204.5 523.5H209.5M204.5 525.5H209.5" stroke="#8a8a8e" stroke-width="0.9"/>
<g transform="translate(282.6,522.4)" fill="#6e6e72"><rect x="-1.6" y="-7.6" width="3.2" height="4" transform="rotate(0)"/><rect x="-1.6" y="-7.6" width="3.2" height="4" transform="rotate(45)"/><rect x="-1.6" y="-7.6" width="3.2" height="4" transform="rotate(90)"/><rect x="-1.6" y="-7.6" width="3.2" height="4" transform="rotate(135)"/><rect x="-1.6" y="-7.6" width="3.2" height="4" transform="rotate(180)"/><rect x="-1.6" y="-7.6" width="3.2" height="4" transform="rotate(225)"/><rect x="-1.6" y="-7.6" width="3.2" height="4" transform="rotate(270)"/><rect x="-1.6" y="-7.6" width="3.2" height="4" transform="rotate(315)"/><circle r="5.4"/><circle r="2.4" fill="#2d2d30"/></g>
</svg>
<div id="labels">
<span class="t " style="left:25.50px;top:6.84px;font-size:12px;letter-spacing:0.031px;color:#c8c8c8;">Hierarchy</span>
<span class="t " style="left:519.00px;top:6.84px;font-size:12px;letter-spacing:0.000px;color:#c8c8c8;">Content</span>
<span class="t " style="left:736.50px;top:6.84px;font-size:12px;letter-spacing:-0.083px;color:#ffffff;">Properties</span>
<span class="t " style="left:736.78px;top:28.84px;font-size:12px;letter-spacing:0.190px;color:#c8c8c8;">Inputs</span>
<span class="t " style="left:797.00px;top:28.84px;font-size:12px;letter-spacing:0.250px;color:#c8c8c8;">Outputs</span>
<span class="t " style="left:763.13px;top:62.69px;font-size:11px;letter-spacing:0.050px;color:#c8c8c8;font-weight:700;">Animation</span>
<span class="t " style="left:762.47px;top:78.69px;font-size:11px;letter-spacing:0.094px;color:#c8c8c8;">Keyframe Animation</span>
<span class="t " style="left:748.50px;top:104.69px;font-size:11px;letter-spacing:0.031px;color:#c8c8c8;">Animation</span>
<span class="t " style="left:833.92px;top:122.69px;font-size:11px;letter-spacing:0.092px;color:#c8c8c8;">Control</span>
<span class="t " style="left:175.95px;top:102.69px;font-size:11px;letter-spacing:0.500px;color:#c8c8c8;">Null</span>
<span class="t " style="left:251.00px;top:102.69px;font-size:11px;letter-spacing:0.067px;color:#c8c8c8;">Cube</span>
<span class="t " style="left:332.50px;top:102.69px;font-size:11px;letter-spacing:0.167px;color:#c8c8c8;">Cube</span>
<span class="t " style="left:414.75px;top:102.69px;font-size:11px;letter-spacing:0.033px;color:#c8c8c8;">Cube</span>
<span class="t " style="left:556.90px;top:73.69px;font-size:11px;letter-spacing:0.067px;color:#c8c8c8;">Cube</span>
<span class="t " style="left:527.30px;top:178.69px;font-size:11px;letter-spacing:0.031px;color:#c8c8c8;">Animation</span>
<span class="t " style="left:26.50px;top:281.84px;font-size:12px;letter-spacing:0.052px;color:#c8c8c8;">Animation - TimeView - default</span>
<span class="t " style="left:60.70px;top:304.69px;font-size:11px;letter-spacing:0.153px;color:#c8c8c8;font-weight:700;">3D Layer 1/Animation</span>
<span class="t " style="left:159.93px;top:329.84px;font-size:12px;letter-spacing:0.150px;color:#c8c8c8;">10</span>
<span class="t " style="left:394.23px;top:304.96px;font-size:9.5px;letter-spacing:-1.000px;color:#77777b;">1.0</span>
<span class="t " style="left:506.25px;top:305.69px;font-size:11px;letter-spacing:0.125px;color:#999999;">Pos</span>
<span class="t " style="left:609.45px;top:305.69px;font-size:11px;letter-spacing:0.050px;color:#999999;">Val</span>
<span class="t " style="left:6.50px;top:351.69px;font-size:11px;letter-spacing:0.083px;color:#c8c8c8;">default</span>
<span class="t " style="left:173.20px;top:351.69px;font-size:11px;letter-spacing:0.042px;color:#c8c8c8;">Current</span>
<span class="t " style="left:50.50px;top:368.69px;font-size:11px;letter-spacing:0.417px;color:#c8c8c8;font-weight:700;">Cube</span>
<span class="t " style="left:90.22px;top:368.69px;font-size:11px;letter-spacing:0.136px;color:#c8c8c8;">Position</span>
<span class="t " style="left:139.27px;top:368.69px;font-size:11px;letter-spacing:0.000px;color:#c8c8c8;">X</span>
<span class="t " style="left:139.27px;top:385.69px;font-size:11px;letter-spacing:0.000px;color:#c8c8c8;">Y</span>
<span class="t " style="left:139.52px;top:402.69px;font-size:11px;letter-spacing:0.000px;color:#c8c8c8;">Z</span>
<span class="t " style="left:192.20px;top:368.69px;font-size:11px;letter-spacing:0.167px;color:#c8c8c8;">-3,4795</span>
<span class="t " style="left:203.50px;top:385.69px;font-size:11px;letter-spacing:0.500px;color:#c8c8c8;">0,0</span>
<span class="t " style="left:203.50px;top:402.69px;font-size:11px;letter-spacing:0.500px;color:#c8c8c8;">0,0</span>
<span class="t " style="left:78.30px;top:499.69px;font-size:11px;letter-spacing:0.600px;color:#c8c8c8;">0,0</span>
<span class="t " style="left:803.25px;top:499.69px;font-size:11px;letter-spacing:0.250px;color:#c8c8c8;">10,0</span>
<span class="t " style="left:27.28px;top:516.84px;font-size:12px;letter-spacing:0.041px;color:#c8c8c8;">Animation - TimeView - default</span>
<span class="t " style="left:217.40px;top:516.84px;font-size:12px;letter-spacing:-0.464px;color:#c8c8c8;">Messages</span>
<span class="t " style="left:294.55px;top:516.84px;font-size:12px;letter-spacing:-0.414px;color:#c8c8c8;">Renderer</span>
<span class="t " style="left:373.57px;top:306.05px;font-size:7.5px;letter-spacing:-0.675px;color:#626266;">1.0</span>
</div>
</body></html>
